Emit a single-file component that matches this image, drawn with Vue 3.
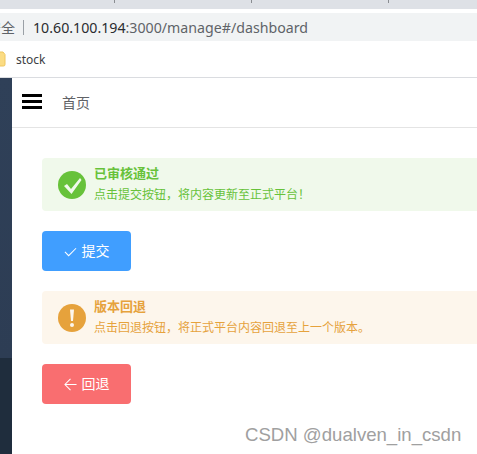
<script setup>
const notices = [
  {
    type: 'success',
    title: '已审核通过',
    desc: '点击提交按钮，将内容更新至正式平台！',
    button: '提交'
  },
  {
    type: 'warning',
    title: '版本回退',
    desc: '点击回退按钮，将正式平台内容回退至上一个版本。',
    button: '回退'
  }
]
</script>
<template>
  <div class="browser">
    <div class="tabstrip">
      <i class="tick tick-a"></i>
      <i class="tick tick-b"></i>
      <i class="tick tick-c"></i>
    </div>
    <div class="address">
      <span class="secure">安全</span>
      <span class="divider"></span>
      <span class="url"><span class="host">10.60.100.194</span>:3000/manage#/dashboard</span>
    </div>
    <div class="bookmarks">
      <svg class="folder" width="6" height="16" viewBox="0 0 6 16">
        <path d="M-6 1H3L5 3.500V13.500Q5 15 3.500 15H-6Z" fill="#fbdc83" stroke="#eec65f" stroke-width="1" />
      </svg>
      <span class="bookmark">stock</span>
    </div>
    <div class="app">
      <aside class="sidebar">
        <div class="side-top"></div>
        <div class="side-bottom"></div>
      </aside>
      <main class="main">
        <header class="navbar">
          <div class="hamburger"><span></span><span></span><span></span></div>
          <span class="crumb">首页</span>
        </header>
        <section class="content">
          <div v-for="item in notices" :key="item.type" class="block">
            <div class="alert" :class="item.type">
              <svg v-if="item.type === 'success'" class="alert-icon" viewBox="0 0 28 28">
                <circle cx="14" cy="14" r="14" fill="#67c23a" />
                <path d="M6 15L9 13L13 18L22 7L23.500 9L13.500 23Z" fill="#f0f9eb" />
              </svg>
              <svg v-else class="alert-icon" viewBox="0 0 28 28">
                <circle cx="14" cy="14" r="14" fill="#e6a23c" />
                <path d="M12 5.500H16L15 17H13Z" fill="#fdf6ec" />
                <circle cx="14" cy="21" r="2" fill="#fdf6ec" />
              </svg>
              <div class="alert-text">
                <div class="alert-title">{{ item.title }}</div>
                <div class="alert-desc">{{ item.desc }}</div>
              </div>
            </div>
            <button class="btn" :class="item.type" type="button">
              <svg v-if="item.type === 'success'" class="btn-icon" viewBox="0 0 14 14">
                <path d="M1 7.500L5 11.500L13 3.500" fill="none" stroke="#fff" stroke-width="1.100" />
              </svg>
              <svg v-else class="btn-icon" viewBox="0 0 14 14">
                <path d="M13.500 7H1M7 1L1 7L7 13" fill="none" stroke="#fff" stroke-width="1.100" />
              </svg>
              <span class="btn-label">{{ item.button }}</span>
            </button>
          </div>
        </section>
      </main>
    </div>
    <div class="watermark">CSDN @dualven_in_csdn</div>
  </div>
</template>
<style scoped>
.browser {
  position: relative;
  width: 477px;
  height: 454px;
  overflow: hidden;
  display: flex;
  flex-direction: column;
  background: #fff;
  font-family: "Liberation Sans", "Noto Sans CJK SC", sans-serif;
}

.tabstrip {
  position: relative;
  height: 9px;
  margin-bottom: 4px;
  background: #dee1e6;
  flex: none;
}

.tick {
  position: absolute;
  top: 0;
  width: 1px;
  height: 3px;
  background: #8a8d91;
}

.tick-a { left: 114px; }
.tick-b { left: 251px; }
.tick-c { left: 388px; }

.address {
  height: 28px;
  flex: none;
  display: flex;
  align-items: center;
  margin-left: -13px;
  background: #f1f3f4;
  font-size: 14.2px;
  color: #5f6368;
  font-family: "Noto Sans", "Noto Sans CJK SC", sans-serif;
}

.secure {
  width: 28px;
  font-size: 14px;
  white-space: nowrap;
}

.divider {
  width: 1px;
  height: 15px;
  margin-left: 8px;
  margin-right: 9px;
  background: #9aa0a6;
}

.url {
  white-space: nowrap;
}

.host {
  color: #2b2c2f;
}

.bookmarks {
  height: 36px;
  flex: none;
  display: flex;
  align-items: center;
  border-bottom: 1px solid #dadce0;
}

.folder {
  flex: none;
}

.bookmark {
  margin-left: 10px;
  font-size: 12px;
  color: #3c4043;
  font-family: "Noto Sans", sans-serif;
}

.app {
  flex: 1;
  display: flex;
  min-height: 0;
}

.sidebar {
  width: 12px;
  flex: none;
  display: flex;
  flex-direction: column;
}

.side-top {
  height: 280px;
  background: linear-gradient(#2f4058, #2d3d54);
}

.side-bottom {
  flex: 1;
  background: #1f2d3d;
}

.main {
  flex: 1;
  min-width: 0;
}

.navbar {
  height: 49px;
  display: flex;
  align-items: center;
  border-bottom: 1px solid #e4e4e4;
  padding-left: 10px;
}

.hamburger {
  width: 20px;
  height: 15px;
  margin-bottom: 2px;
  display: flex;
  flex-direction: column;
  justify-content: space-between;
}

.hamburger span {
  height: 3px;
  background: #000;
}

.crumb {
  margin-left: 20px;
  padding-bottom: 2px;
  font-size: 14px;
  color: #606266;
}

.content {
  padding: 30px 0 0 30px;
  display: flex;
  flex-direction: column;
  gap: 20px;
}

.block {
  display: flex;
  flex-direction: column;
  align-items: flex-start;
  gap: 20px;
}

.alert {
  width: 470px;
  height: 53px;
  box-sizing: border-box;
  padding-left: 16px;
  border-radius: 4px;
  display: flex;
  align-items: center;
}

.alert.success {
  background: #f0f9eb;
  color: #67c23a;
}

.alert.warning {
  background: #fdf6ec;
  color: #e6a23c;
}

.alert-icon {
  width: 28px;
  height: 28px;
  flex: none;
}

.alert-text {
  margin-left: 8px;
  padding-bottom: 1px;
}

.alert-title {
  font-size: 13px;
  line-height: 16px;
  font-weight: 700;
}

.alert-desc {
  margin-top: 6px;
  font-size: 12px;
  line-height: 14px;
  white-space: nowrap;
}

.btn {
  width: 89px;
  height: 40px;
  padding: 0;
  border: 0;
  border-radius: 4px;
  display: flex;
  align-items: center;
  justify-content: center;
  gap: 5px;
  color: #fff;
  font-size: 14px;
  font-family: inherit;
}

.btn.success {
  background: #409eff;
}

.btn.warning {
  background: #f96e70;
}

.btn-icon {
  width: 13px;
  height: 13px;
  flex: none;
}

.btn-label {
  padding-bottom: 2px;
}

.watermark {
  position: absolute;
  left: 245px;
  top: 424px;
  font-size: 18.6px;
  line-height: 22px;
  color: #a0a0a0;
  white-space: nowrap;
}
</style>
